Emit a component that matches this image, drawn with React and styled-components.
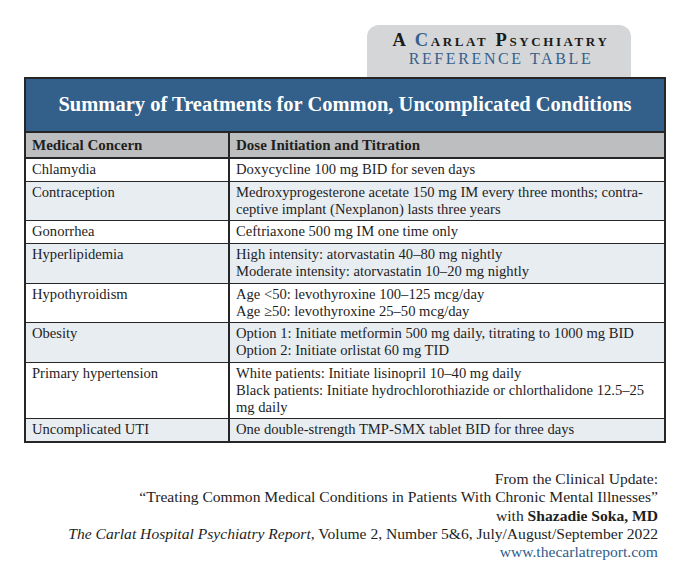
import React from 'react';
import styled, { createGlobalStyle } from 'styled-components';

const GlobalStyle = createGlobalStyle`
  html, body {
    margin: 0;
    padding: 0;
    background: #ffffff;
  }
  body {
    font-family: "Liberation Serif", "Times New Roman", serif;
    color: #1e1e1e;
  }
`;

const Page = styled.div`
  width: 700px;
  height: 588px;
  box-sizing: border-box;
  padding: 25px 34px 0 24px;
`;

const TabRow = styled.div`
  display: flex;
  justify-content: flex-end;
  padding-right: 35px;
`;

const Tab = styled.div`
  width: 264px;
  height: 52px;
  box-sizing: border-box;
  background: #d5d6d8;
  border-radius: 12px 12px 0 0;
  display: flex;
  flex-direction: column;
  align-items: center;
  padding-top: 5px;
  padding-left: 4px;
`;

const TabTitle = styled.div`
  font-size: 18.5px;
  line-height: 20px;
  letter-spacing: 2.6px;
  font-variant: small-caps;
  font-weight: 700;
  color: #1b1b1b;
  white-space: nowrap;
`;

const TabSub = styled.div`
  margin-top: 1px;
  font-size: 16px;
  line-height: 16px;
  letter-spacing: 2.6px;
  color: #36608c;
  white-space: nowrap;
`;

const Blue = styled.span`
  color: #36608c;
`;

const Table = styled.table`
  width: 642px;
  border-collapse: collapse;
  border: 2px solid #262626;
  font-size: 14.6px;
`;

const TitleCell = styled.th`
  background: #33608b;
  color: #ffffff;
  font-size: 20.5px;
  font-weight: 700;
  height: 50px;
  padding: 0 0 2px;
  text-align: center;
  border-bottom: 2px solid #262626;
`;

const HeadCell = styled.th`
  background: #bdbec0;
  text-align: left;
  font-weight: 700;
  font-size: 15px;
  height: 24px;
  padding: 0 6px;
  border: 2px solid #262626;
  width: ${p => p.width || 'auto'};
`;

const Row = styled.tr`
  background: ${p => (p.alt ? '#e8edf2' : '#ffffff')};
`;

const Cell = styled.td`
  vertical-align: top;
  padding: 2px 6px 3px;
  line-height: 16.8px;
  border: 2px solid #262626;
  border-width: 1.5px 2px;
`;

const Footer = styled.div`
  margin-top: 27px;
  margin-right: 8px;
  text-align: right;
  font-size: 15.6px;
  line-height: 18.3px;
  color: #1e1e1e;
`;

const Url = styled.div`
  color: #2f5d8c;
`;

const rows = [
  ['Chlamydia', ['Doxycycline 100 mg BID for seven days']],
  ['Contraception', ['Medroxyprogesterone acetate 150 mg IM every three months; contra-', 'ceptive implant (Nexplanon) lasts three years']],
  ['Gonorrhea', ['Ceftriaxone 500 mg IM one time only']],
  ['Hyperlipidemia', ['High intensity: atorvastatin 40–80 mg nightly', 'Moderate intensity: atorvastatin 10–20 mg nightly']],
  ['Hypothyroidism', ['Age <50: levothyroxine 100–125 mcg/day', 'Age ≥50: levothyroxine 25–50 mcg/day']],
  ['Obesity', ['Option 1: Initiate metformin 500 mg daily, titrating to 1000 mg BID', 'Option 2: Initiate orlistat 60 mg TID']],
  ['Primary hypertension', ['White patients: Initiate lisinopril 10–40 mg daily', 'Black patients: Initiate hydrochlorothiazide or chlorthalidone 12.5–25', 'mg daily']],
  ['Uncomplicated UTI', ['One double-strength TMP-SMX tablet BID for three days']],
];

const App = () => (
  <Page>
    <GlobalStyle />
    <TabRow>
      <Tab>
        <TabTitle>A <Blue>C</Blue>arlat Psychiatry</TabTitle>
        <TabSub>REFERENCE TABLE</TabSub>
      </Tab>
    </TabRow>
    <Table>
      <thead>
        <tr>
          <TitleCell colSpan={2}>Summary of Treatments for Common, Uncomplicated Conditions</TitleCell>
        </tr>
        <tr>
          <HeadCell width="190px">Medical Concern</HeadCell>
          <HeadCell>Dose Initiation and Titration</HeadCell>
        </tr>
      </thead>
      <tbody>
        {rows.map(([name, lines], i) => (
          <Row key={name} alt={i % 2 === 1}>
            <Cell>{name}</Cell>
            <Cell>
              {lines.map(l => (
                <div key={l}>{l}</div>
              ))}
            </Cell>
          </Row>
        ))}
      </tbody>
    </Table>
    <Footer>
      <div>From the Clinical Update:</div>
      <div>“Treating Common Medical Conditions in Patients With Chronic Mental Illnesses”</div>
      <div>with <b>Shazadie Soka, MD</b></div>
      <div><i>The Carlat Hospital Psychiatry Report</i>, Volume 2, Number 5&amp;6, July/August/September 2022</div>
      <Url>www.thecarlatreport.com</Url>
    </Footer>
  </Page>
);

export default App;
